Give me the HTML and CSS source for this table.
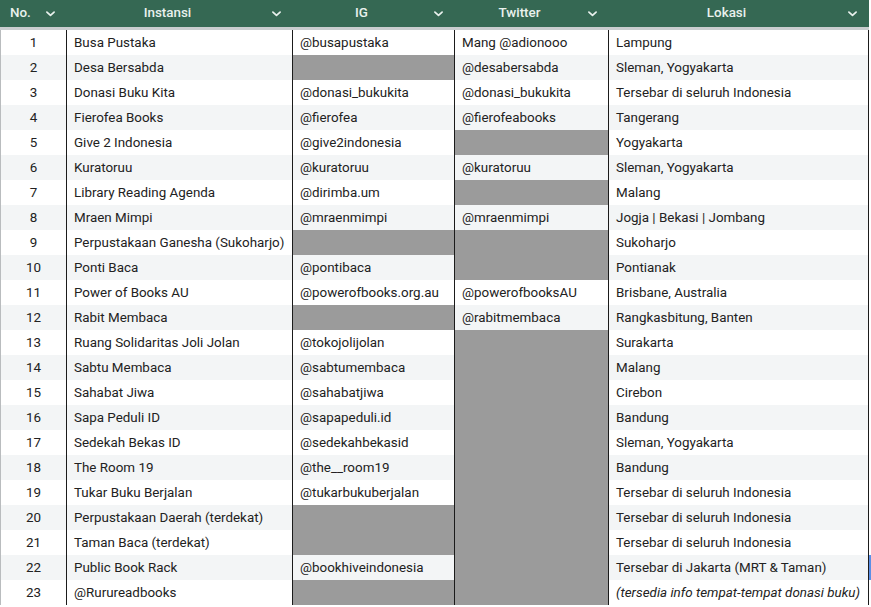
FILE: index.html
```html
<!DOCTYPE html>
<html lang="id">
<head>
<meta charset="utf-8">
<title>Donasi Buku</title>
<link rel="stylesheet" href="styles.css">
</head>
<body>
<div class="sheet">
  <div class="head">
    <div class="hcell"><span class="hlabel">No.</span><svg class="chev" viewBox="0 0 8 5"><path d="M0.8 0.8 L4 3.8 L7.2 0.8" /></svg></div>
    <div class="hcell"><span class="hlabel">Instansi</span><svg class="chev" viewBox="0 0 8 5"><path d="M0.8 0.8 L4 3.8 L7.2 0.8" /></svg></div>
    <div class="hcell"><span class="hlabel">IG</span><svg class="chev" viewBox="0 0 8 5"><path d="M0.8 0.8 L4 3.8 L7.2 0.8" /></svg></div>
    <div class="hcell"><span class="hlabel">Twitter</span><svg class="chev" viewBox="0 0 8 5"><path d="M0.8 0.8 L4 3.8 L7.2 0.8" /></svg></div>
    <div class="hcell"><span class="hlabel">Lokasi</span><svg class="chev" viewBox="0 0 8 5"><path d="M0.8 0.8 L4 3.8 L7.2 0.8" /></svg></div>
  </div>
  <div class="divider"></div>

  <div class="row"><div class="c num">1</div><div class="c">Busa Pustaka</div><div class="c">@busapustaka</div><div class="c">Mang @adionooo</div><div class="c">Lampung</div></div>
  <div class="row alt"><div class="c num">2</div><div class="c">Desa Bersabda</div><div class="c empty"></div><div class="c">@desabersabda</div><div class="c">Sleman, Yogyakarta</div></div>
  <div class="row"><div class="c num">3</div><div class="c">Donasi Buku Kita</div><div class="c">@donasi_bukukita</div><div class="c">@donasi_bukukita</div><div class="c">Tersebar di seluruh Indonesia</div></div>
  <div class="row alt"><div class="c num">4</div><div class="c">Fierofea Books</div><div class="c">@fierofea</div><div class="c">@fierofeabooks</div><div class="c">Tangerang</div></div>
  <div class="row"><div class="c num">5</div><div class="c">Give 2 Indonesia</div><div class="c">@give2indonesia</div><div class="c empty"></div><div class="c">Yogyakarta</div></div>
  <div class="row alt"><div class="c num">6</div><div class="c">Kuratoruu</div><div class="c">@kuratoruu</div><div class="c">@kuratoruu</div><div class="c">Sleman, Yogyakarta</div></div>
  <div class="row"><div class="c num">7</div><div class="c">Library Reading Agenda</div><div class="c">@dirimba.um</div><div class="c empty"></div><div class="c">Malang</div></div>
  <div class="row alt"><div class="c num">8</div><div class="c">Mraen Mimpi</div><div class="c">@mraenmimpi</div><div class="c">@mraenmimpi</div><div class="c">Jogja | Bekasi | Jombang</div></div>
  <div class="row"><div class="c num">9</div><div class="c">Perpustakaan Ganesha (Sukoharjo)</div><div class="c empty"></div><div class="c empty"></div><div class="c">Sukoharjo</div></div>
  <div class="row alt"><div class="c num">10</div><div class="c">Ponti Baca</div><div class="c">@pontibaca</div><div class="c empty"></div><div class="c">Pontianak</div></div>
  <div class="row"><div class="c num">11</div><div class="c">Power of Books AU</div><div class="c">@powerofbooks.org.au</div><div class="c">@powerofbooksAU</div><div class="c">Brisbane, Australia</div></div>
  <div class="row alt"><div class="c num">12</div><div class="c">Rabit Membaca</div><div class="c empty"></div><div class="c">@rabitmembaca</div><div class="c">Rangkasbitung, Banten</div></div>
  <div class="row"><div class="c num">13</div><div class="c">Ruang Solidaritas Joli Jolan</div><div class="c">@tokojolijolan</div><div class="c empty"></div><div class="c">Surakarta</div></div>
  <div class="row alt"><div class="c num">14</div><div class="c">Sabtu Membaca</div><div class="c">@sabtumembaca</div><div class="c empty"></div><div class="c">Malang</div></div>
  <div class="row"><div class="c num">15</div><div class="c">Sahabat Jiwa</div><div class="c">@sahabatjiwa</div><div class="c empty"></div><div class="c">Cirebon</div></div>
  <div class="row alt"><div class="c num">16</div><div class="c">Sapa Peduli ID</div><div class="c">@sapapeduli.id</div><div class="c empty"></div><div class="c">Bandung</div></div>
  <div class="row"><div class="c num">17</div><div class="c">Sedekah Bekas ID</div><div class="c">@sedekahbekasid</div><div class="c empty"></div><div class="c">Sleman, Yogyakarta</div></div>
  <div class="row alt"><div class="c num">18</div><div class="c">The Room 19</div><div class="c">@the__room19</div><div class="c empty"></div><div class="c">Bandung</div></div>
  <div class="row"><div class="c num">19</div><div class="c">Tukar Buku Berjalan</div><div class="c">@tukarbukuberjalan</div><div class="c empty"></div><div class="c">Tersebar di seluruh Indonesia</div></div>
  <div class="row alt"><div class="c num">20</div><div class="c">Perpustakaan Daerah (terdekat)</div><div class="c empty"></div><div class="c empty"></div><div class="c">Tersebar di seluruh Indonesia</div></div>
  <div class="row"><div class="c num">21</div><div class="c">Taman Baca (terdekat)</div><div class="c empty"></div><div class="c empty"></div><div class="c">Tersebar di seluruh Indonesia</div></div>
  <div class="row alt"><div class="c num">22</div><div class="c">Public Book Rack</div><div class="c">@bookhiveindonesia</div><div class="c empty"></div><div class="c selected">Tersebar di Jakarta (MRT &amp; Taman)</div></div>
  <div class="row"><div class="c num">23</div><div class="c">@Rurureadbooks</div><div class="c empty"></div><div class="c empty"></div><div class="c"><span class="note">(tersedia info tempat-tempat donasi buku)</span></div></div>
</div>
</body>
</html>
```

FILE: styles.css
```css
html, body {
  margin: 0;
  padding: 0;
  background: #ffffff;
}

body {
  font-family: Roboto, "Liberation Sans", Arial, sans-serif;
  font-size: 13.4px;
  color: #222222;
}

.sheet {
  width: 871px;
}

.head,
.row {
  display: grid;
  grid-template-columns: 67px 226px 162px 154px 260px 2px;
}

.head {
  height: 27px;
  background: #356853;
  grid-template-columns: 67px 226px 162px 154px 260px;
  width: 869px;
}

.hcell {
  display: flex;
  align-items: center;
  color: #e9f1ed;
  font-weight: 500;
  font-size: 13.4px;
  padding-bottom: 2px;
}

.hlabel {
  flex: 1;
  text-align: center;
}

.hcell:first-child .hlabel {
  text-align: left;
  padding-left: 10px;
  flex: 0 0 auto;
  margin-right: auto;
}

.chev {
  width: 9px;
  height: 6px;
  margin: 2px 12px 0 4px;
  flex: 0 0 auto;
}

.chev path {
  fill: none;
  stroke: #e9f1ed;
  stroke-width: 1.5;
  stroke-linecap: round;
  stroke-linejoin: round;
}

.divider {
  height: 3px;
  width: 869px;
  background: #c9cdcf;
}

.row {
  height: 25px;
  background: #ffffff;
}

.row.alt {
  background: #f3f5f6;
}

.c {
  box-sizing: border-box;
  border-right: 1px solid #1b1b1b;
  padding: 1px 4px 0 7px;
  display: flex;
  align-items: center;
  white-space: nowrap;
  overflow: hidden;
  line-height: 24px;
}

.c.num {
  justify-content: center;
  border-left: 1px solid #b9bcbe;
  padding: 1px 0 0 0;
}

.c.empty {
  background: #9b9b9b;
}

.row::after {
  content: "";
  background: #ffffff;
}

.row.alt:has(.selected)::after {
  background: #5b8fe6;
}

.note {
  font-style: italic;
}
```
